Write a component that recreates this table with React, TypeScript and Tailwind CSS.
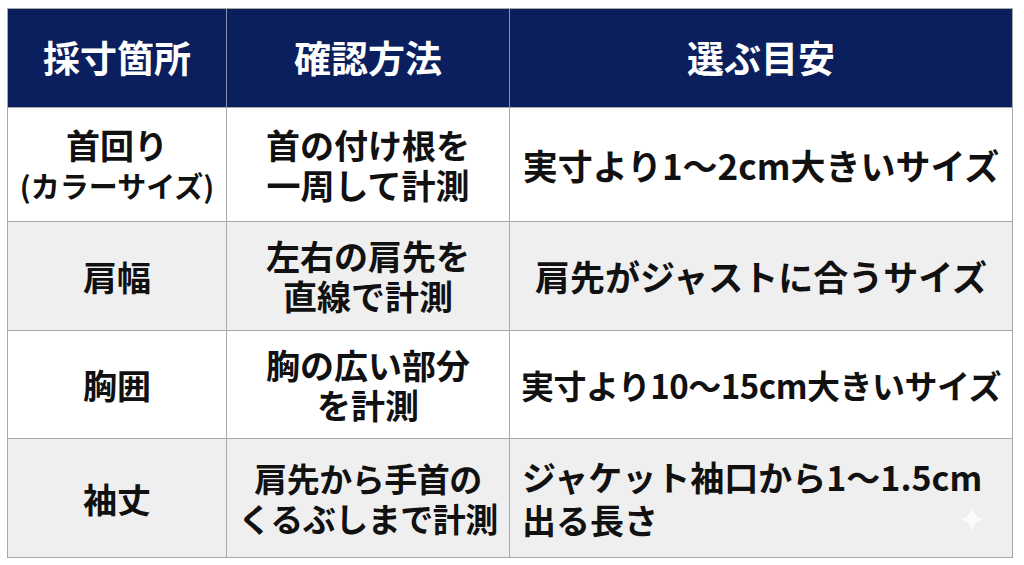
const font = { fontFamily: '"Noto Sans CJK JP", "Noto Sans", sans-serif' }

const rows = [
  {
    h: 'h-[114px]',
    bg: 'bg-white',
    part: (
      <>
        <span className="block text-[34px] leading-[40px]">首回り</span>
        <span className="block text-[29px] leading-[40px]">(カラーサイズ)</span>
      </>
    ),
    how: ['首の付け根を', '一周して計測'],
    howCls: 'text-[34px]',
    guide: ['実寸より1〜2cm大きいサイズ'],
    guideCls: 'text-[35px]',
    left: false,
  },
  {
    h: 'h-[109px]',
    bg: 'bg-[#efefef]',
    part: <span className="text-[34px]">肩幅</span>,
    how: ['左右の肩先を', '直線で計測'],
    howCls: 'text-[34px]',
    guide: ['肩先がジャストに合うサイズ'],
    guideCls: 'text-[35px]',
    left: false,
  },
  {
    h: 'h-[108px]',
    bg: 'bg-white',
    part: <span className="text-[34px]">胸囲</span>,
    how: ['胸の広い部分', 'を計測'],
    howCls: 'text-[34px]',
    guide: ['実寸より10〜15cm大きいサイズ'],
    guideCls: 'text-[33px] tracking-[-0.5px]',
    left: false,
  },
  {
    h: 'h-[118px]',
    bg: 'bg-[#efefef]',
    part: <span className="text-[34px]">袖丈</span>,
    how: ['肩先から手首の', 'くるぶしまで計測'],
    howCls: 'text-[33px] tracking-[-0.5px]',
    guide: ['ジャケット袖口から1〜1.5cm', '出る長さ'],
    guideCls: 'text-[34px] leading-[43px]',
    left: true,
  },
]

function Sparkle() {
  return (
    <svg width="28" height="28" viewBox="0 0 24 24" className="absolute right-[26px] bottom-[24px] opacity-80">
      <path d="M12 1 C12.8 7.5 16.5 11.2 23 12 C16.5 12.8 12.8 16.5 12 23 C11.2 16.5 7.5 12.8 1 12 C7.5 11.2 11.2 7.5 12 1 Z" fill="#ffffff" />
    </svg>
  )
}

export default function App() {
  return (
    <div className="w-[1024px] h-[565px] bg-white pt-[8px] pl-[7px]" style={font}>
      <div className="w-[1006px] border border-[#a8a8a8] grid grid-cols-[219px_283px_1fr] font-bold text-[#111]">
        <div className="h-[99px] bg-[#0b1f5e] text-white text-[37px] flex items-center justify-center border-r border-[#8a93ad] border-b border-b-[#a8a8a8]">採寸箇所</div>
        <div className="h-[99px] bg-[#0b1f5e] text-white text-[37px] flex items-center justify-center border-r border-[#8a93ad] border-b border-b-[#a8a8a8]">確認方法</div>
        <div className="h-[99px] bg-[#0b1f5e] text-white text-[37px] flex items-center justify-center border-b border-[#a8a8a8]">選ぶ目安</div>
        {rows.map((r, i) => {
          const last = i === rows.length - 1
          const bb = last ? '' : 'border-b border-[#a8a8a8]'
          return (
            <div key={i} className="contents">
              <div className={`${r.h} ${r.bg} ${bb} border-r border-[#a8a8a8] flex flex-col items-center justify-center text-center`}>
                {r.part}
              </div>
              <div className={`${r.h} ${r.bg} ${bb} border-r border-[#a8a8a8] flex flex-col items-center justify-center text-center leading-[40px] ${r.howCls}`}>
                {r.how.map((t) => (
                  <span key={t} className="whitespace-nowrap">{t}</span>
                ))}
              </div>
              <div className={`${r.h} ${r.bg} ${bb} relative flex flex-col justify-center leading-[42px] ${r.guideCls} ${r.left ? 'items-start pl-[12px]' : 'items-center text-center'}`}>
                {r.guide.map((t) => (
                  <span key={t} className="whitespace-nowrap">{t}</span>
                ))}
                {last && <Sparkle />}
              </div>
            </div>
          )
        })}
      </div>
    </div>
  )
}
